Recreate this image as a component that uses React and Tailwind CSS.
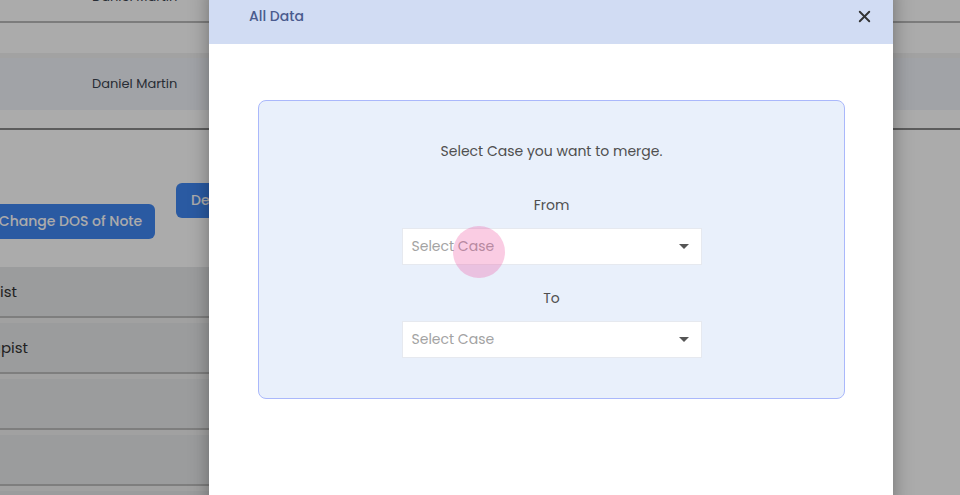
import React from 'react';
import { X } from 'lucide-react';

const font = { fontFamily: 'Poppins, "Open Sans", "Liberation Sans", sans-serif' };

const CaseSelect = () => (
  <div className="flex items-center justify-between w-[300px] h-[37px] bg-white border border-[#e6e9ef] pl-[9px] pr-[12px]">
    <span className="text-[14px] text-[#a3a3a3]">Select Case</span>
    <span className="w-0 h-0 border-l-[5px] border-r-[5px] border-t-[5px] border-l-transparent border-r-transparent border-t-[#555555]" />
  </div>
);

// Các dòng danh sách phía sau modal (chỉ thấy phần cuối chữ)
const rows = [
  { text: 'Specialist', end: 17 },
  { text: 'Therapist', end: 28 },
  { text: '', end: 0 },
  { text: '', end: 0 },
  { text: '', end: 0 },
];

const App = () => {
  return (
    <div className="relative w-[960px] h-[495px] overflow-hidden bg-white" style={font}>
      {/* Trang phía sau */}
      <div className="flex flex-col">
        <div className="h-[21px] overflow-hidden">
          <span className="block ml-[92px] -mt-[13px] text-[13px] leading-[20px] text-[#3d4450] whitespace-nowrap">Daniel Martin</span>
        </div>
        <div className="h-[2px] bg-[#b9b9b9]" />
        <div className="h-[30px]" />
        <div className="h-[5px] bg-[#f2f2f2]" />
        <div className="h-[52px] bg-[#f0f4fa] flex items-center">
          <span className="ml-[92px] text-[13px] text-[#3d4450]">Daniel Martin</span>
        </div>
        <div className="h-[18px]" />
        <div className="h-[2px] bg-[#8a8a8a]" />

        <div className="relative h-[137px] w-[400px]">
          <button className="absolute left-[-14px] top-[74px] h-[35px] w-[169px] rounded-md bg-[#3f86f2] text-white text-[14px] font-medium">
            Change DOS of Note
          </button>
          <button className="absolute left-[176px] top-[53px] h-[35px] w-[90px] rounded-md bg-[#3f86f2] text-white text-[14px] font-medium text-left pl-[15px]">
            Delete
          </button>
        </div>

        <div className="flex flex-col w-[400px]">
          {rows.map((r, i) => (
            <div key={i} className="flex flex-col">
              <div className="h-[49px] bg-[#e8e9eb] flex items-center pt-[2px]">
                {r.text && (
                  <div className="flex justify-end" style={{ width: r.end }}>
                    <span className="text-[15px] text-[#333333] whitespace-nowrap">{r.text}</span>
                  </div>
                )}
              </div>
              <div className="h-[2px] bg-[#bcbcbc]" />
              <div className="h-[5px] bg-[#f1f1f1]" />
            </div>
          ))}
        </div>
      </div>

      {/* Lớp phủ */}
      <div className="absolute inset-0 bg-black/[0.33]" />

      {/* Modal */}
      <div className="absolute left-[209px] top-[-12px] w-[684px] h-[520px] bg-white flex flex-col shadow-[0_0_18px_rgba(0,0,0,0.35)]">
        <div className="h-[56px] bg-[#d1dcf3] flex items-center justify-between pl-[40px] pr-[19px]">
          <span className="text-[14px] text-[#4a5b8e] font-medium">All Data</span>
          <X className="w-[19px] h-[19px] text-[#333333]" strokeWidth={2.4} />
        </div>
        <div className="pt-[56px] px-[49px] pr-[48px]">
          <div className="h-[299px] rounded-[8px] border-[1.5px] border-[#aab8fb] bg-[#e9f0fb] flex flex-col items-center pt-[40px]">
            <p className="text-[14px] text-[#4f4f4f] leading-[20px]">Select Case you want to merge.</p>
            <p className="mt-[34px] text-[14px] text-[#4f4f4f] leading-[20px]">From</p>
            <div className="mt-[13px]">
              <CaseSelect />
            </div>
            <p className="mt-[23px] text-[14px] text-[#4f4f4f] leading-[20px]">To</p>
            <div className="mt-[13px]">
              <CaseSelect />
            </div>
          </div>
        </div>
      </div>

      {/* Điểm nhấp chuột */}
      <div className="absolute left-[453px] top-[226px] w-[52px] h-[52px] rounded-full bg-[#ec4899]/[0.28]" />
    </div>
  );
};

export default App;
